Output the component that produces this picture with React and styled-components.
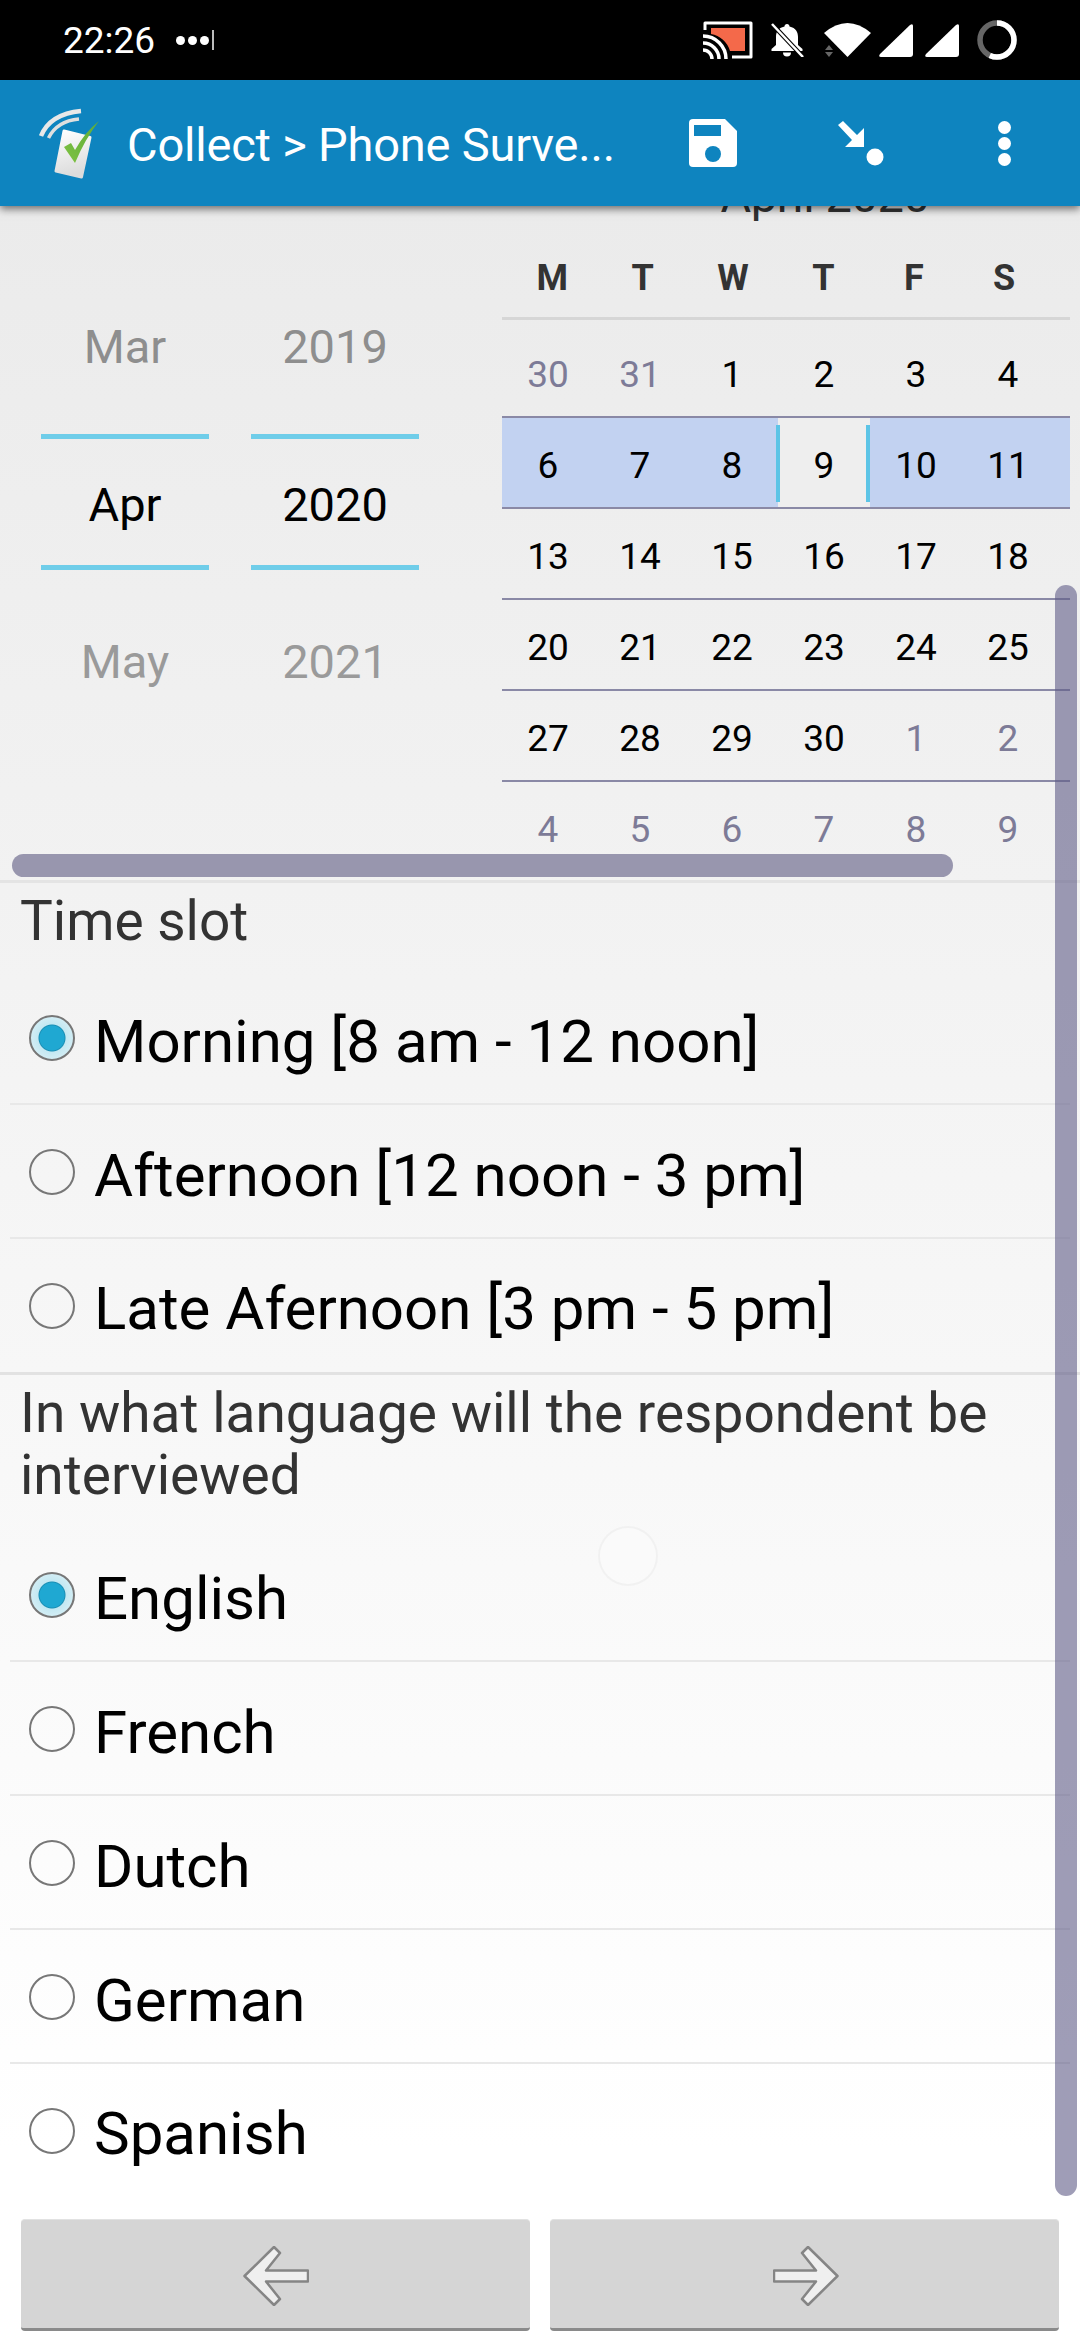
import React from "react";
import styled, { createGlobalStyle } from "styled-components";

const BLUE = "#0e84bf";
const TIME_SLOTS = ["Morning [8 am - 12 noon]", "Afternoon [12 noon - 3 pm]", "Late Afernoon [3 pm - 5 pm]"];
const LANGUAGES = ["English", "French", "Dutch", "German", "Spanish"];
const WEEKDAYS = ["M", "T", "W", "T", "F", "S"];
const WEEKS = [
  [[30, true], [31, true], [1], [2], [3], [4]],
  [[6], [7], [8], [9], [10], [11]],
  [[13], [14], [15], [16], [17], [18]],
  [[20], [21], [22], [23], [24], [25]],
  [[27], [28], [29], [30], [1, true], [2, true]],
  [[4, true], [5, true], [6, true], [7, true], [8, true], [9, true]],
];

const App = () => (
  <>
    <GlobalStyle />
    <Page>
      <StatusBar>
        <Clock>22:26</Clock>
        <NotifDots>
          <i />
          <i />
          <i />
        </NotifDots>
        <NotifBar />
        <StatusIcons>
          <CastIcon />
          <BellOffIcon />
          <WifiIcon />
          <SignalIcon $gap={7} />
          <SignalIcon $gap={11} />
          <BatteryRing />
        </StatusIcons>
      </StatusBar>

      <AppBar>
        <Logo />
        <Title>Collect &gt; Phone Surve...</Title>
        <SaveIcon />
        <GotoIcon />
        <MenuDots>
          <i />
          <i />
          <i />
        </MenuDots>
      </AppBar>

      <Main>
        <DateWidget>
          <Pickers>
            <PickerColumn>
              <PickerOption>Mar</PickerOption>
              <PickerCurrent>Apr</PickerCurrent>
              <PickerOption $faded>May</PickerOption>
            </PickerColumn>
            <PickerColumn>
              <PickerOption>2019</PickerOption>
              <PickerCurrent>2020</PickerCurrent>
              <PickerOption $faded>2021</PickerOption>
            </PickerColumn>
          </Pickers>
          <Calendar>
            <MonthTitle>April 2020</MonthTitle>
            <WeekHeader>
              {WEEKDAYS.map((d, i) => (
                <span key={i}>{d}</span>
              ))}
            </WeekHeader>
            <Weeks>
              {WEEKS.map((week, i) => (
                <WeekRow key={i} $selected={i === 1}>
                  {week.map(([day, muted]) => (
                    <Day key={day} $muted={muted} $focused={i === 1 && day === 9}>
                      {day}
                    </Day>
                  ))}
                </WeekRow>
              ))}
            </Weeks>
          </Calendar>
        </DateWidget>

        <Question>
          <Prompt>Time slot</Prompt>
          {TIME_SLOTS.map((label, i) => (
            <Option key={label} $last={i === TIME_SLOTS.length - 1}>
              <Radio $checked={i === 0} />
              <OptionLabel>{label}</OptionLabel>
            </Option>
          ))}
        </Question>

        <SectionRule />

        <Question>
          <Prompt $tall>In what language will the respondent be interviewed</Prompt>
          {LANGUAGES.map((label, i) => (
            <Option key={label} $last={i === LANGUAGES.length - 1}>
              <Radio $checked={i === 0} />
              <OptionLabel>{label}</OptionLabel>
            </Option>
          ))}
        </Question>

        <HorizontalThumb />
        <VerticalThumb />
        <TouchGhost />
      </Main>

      <NavBar>
        <NavButton>
          <ArrowIcon />
        </NavButton>
        <NavButton>
          <ArrowIcon $flip />
        </NavButton>
      </NavBar>
    </Page>
  </>
);

/* ---- drawings ---- */

const CastIcon = () => (
  <Glyph width="50" height="38" viewBox="0 0 50 38">
    <path d="M8 7H42V30H27A24 24 0 0 0 8 13Z" fill="#f4694a" />
    <path d="M2 9V2H48V36H29" fill="none" stroke="#fff" strokeWidth="3" strokeLinejoin="round" />
    <path
      d="M0 15A23 23 0 0 1 23 38M0 22A16 16 0 0 1 16 38M0 29A9 9 0 0 1 9 38"
      fill="none"
      stroke="#fff"
      strokeWidth="3.5"
    />
  </Glyph>
);

const BellOffIcon = () => (
  <Glyph $gap={17} width="34" height="34" viewBox="0 0 34 34">
    <path
      d="M17 1c-1.500 0-2.500 1-2.500 2.500C8 5 6 9 6 14v8l-4.500 4v2h31v-2l-4.500-4v-8c0-5-2-9-8.500-10.500C19.500 2 18.500 1 17 1zM13 29.500a4 4 0 0 0 8 0z"
      fill="#fff"
    />
    <path d="M2 1L33 34" stroke="#000" strokeWidth="4.500" />
    <path d="M2 1L33 34" stroke="#fff" strokeWidth="2.500" />
  </Glyph>
);

const WifiIcon = () => (
  <Glyph $gap={20} width="47" height="34" viewBox="0 0 47 34">
    <path d="M0 10Q23.500 -10 47 10L23.500 34Z" fill="#fff" />
    <path d="M1 27L5 22L9 27ZM1 29L5 34L9 29Z" fill="#666" />
  </Glyph>
);

const SignalIcon = ({ $gap }) => (
  <Glyph $gap={$gap} width="35" height="34" viewBox="0 0 35 34">
    <path d="M2 31L32 2Q35 0 35 3V31Q35 34 32 34H3Q0 34 2 31Z" fill="#fff" />
  </Glyph>
);

const BatteryRing = () => (
  <Glyph $gap={18} width="40" height="40" viewBox="0 0 40 40">
    <circle cx="20" cy="20" r="17" fill="none" stroke="#666" strokeWidth="5.500" />
    <circle
      cx="20"
      cy="20"
      r="17"
      fill="none"
      stroke="#fff"
      strokeWidth="5.500"
      pathLength="100"
      strokeDasharray="57 100"
      transform="rotate(-90 20 20)"
    />
  </Glyph>
);

const Logo = () => (
  <LogoSvg width="70" height="75" viewBox="35 25 70 75">
    <defs>
      <linearGradient id="logoCard" x1="0" y1="0" x2="0.2" y2="1">
        <stop offset="0" stopColor="#ffffff" />
        <stop offset="1" stopColor="#dcdcdc" />
      </linearGradient>
      <linearGradient id="logoCheck" x1="0" y1="1" x2="1" y2="0">
        <stop offset="0" stopColor="#7fc241" />
        <stop offset="1" stopColor="#5cab3a" />
      </linearGradient>
    </defs>
    <path d="M41 55Q50 33 81 30" fill="none" stroke="#e8e8e8" strokeWidth="4.500" />
    <path d="M48.500 57Q57 40 79 38" fill="none" stroke="#dfdfdf" strokeWidth="3.500" />
    <path d="M64 50L90 56.500L81.500 96L56 90Z" fill="url(#logoCard)" stroke="url(#logoCard)" strokeWidth="3" strokeLinejoin="round" />
    <path d="M64 66L71 62L75 69Q85 51 99 40Q85 58 75 82Z" fill="url(#logoCheck)" />
  </LogoSvg>
);

const SaveIcon = () => (
  <ActionSvg $gap={0} width="48" height="48" viewBox="0 0 48 48">
    <path d="M4 0H36L48 12V44A4 4 0 0 1 44 48H4A4 4 0 0 1 0 44V4A4 4 0 0 1 4 0Z" fill="#fff" />
    <rect x="5" y="6" width="27" height="11" fill={BLUE} />
    <circle cx="24" cy="35" r="8" fill={BLUE} />
  </ActionSvg>
);

const GotoIcon = () => (
  <ActionSvg $gap={100} width="47" height="46" viewBox="0 0 47 46">
    <path d="M1 5L6 1L20 15L27 8V27H8L15 20Z" fill="#fff" />
    <circle cx="38" cy="37" r="8.500" fill="#fff" />
  </ActionSvg>
);

const ArrowIcon = ({ $flip }) => (
  <ArrowSvg $flip={$flip} width="66" height="60" viewBox="0 0 66 60">
    <path
      d="M1.500 30L31 1L37 7L23 24.500H65V35.500H23L37 53L31 59Z"
      fill="#efefef"
      stroke="#858585"
      strokeWidth="2.500"
      strokeLinejoin="round"
    />
  </ArrowSvg>
);

/* ---- page ---- */

const GlobalStyle = createGlobalStyle`
  html, body {
    margin: 0;
    padding: 0;
    background: #fff;
  }
  * {
    box-sizing: border-box;
  }
`;

const Page = styled.div`
  width: 1080px;
  height: 2340px;
  display: flex;
  flex-direction: column;
  overflow: hidden;
  font-family: Roboto, "Liberation Sans", sans-serif;
  background: linear-gradient(#ebebeb 206px, #ffffff 2150px);
`;

const StatusBar = styled.header`
  height: 80px;
  flex: none;
  background: #000;
  color: #fff;
  display: flex;
  align-items: center;
  padding-left: 63px;
`;

const Clock = styled.span`
  font-size: 37px;
  margin-right: 21px;
`;

const NotifDots = styled.div`
  display: flex;
  gap: 3px;
  i {
    width: 9px;
    height: 9px;
    border-radius: 50%;
    background: #fff;
  }
`;

const NotifBar = styled.div`
  width: 2px;
  height: 20px;
  margin-left: 3px;
  background: #bbb;
`;

const StatusIcons = styled.div`
  margin-left: auto;
  margin-right: 63px;
  display: flex;
  align-items: center;
`;

const Glyph = styled.svg`
  display: block;
  flex: none;
  margin-left: ${(p) => p.$gap || 0}px;
`;

const AppBar = styled.div`
  position: relative;
  z-index: 2;
  height: 126px;
  flex: none;
  display: flex;
  align-items: center;
  padding-left: 35px;
  background: ${BLUE};
  box-shadow: 0 3px 8px rgba(0, 0, 0, 0.55);
`;

const LogoSvg = styled.svg`
  flex: none;
  display: block;
`;

const Title = styled.h1`
  margin: 2px 0 0 22px;
  width: 562px;
  flex: none;
  font-size: 47px;
  letter-spacing: -0.2px;
  font-weight: 400;
  color: #fff;
  white-space: nowrap;
`;

const ActionSvg = styled.svg`
  flex: none;
  display: block;
  margin-left: ${(p) => p.$gap}px;
`;

const MenuDots = styled.div`
  margin-left: 114px;
  display: flex;
  flex-direction: column;
  gap: 3px;
  i {
    width: 13px;
    height: 13px;
    border-radius: 50%;
    background: #fff;
  }
`;

const Main = styled.main`
  position: relative;
  flex: 1;
  min-height: 0;
  overflow: hidden;
`;

const DateWidget = styled.section`
  height: 677px;
  display: flex;
  overflow: hidden;
  border-bottom: 3px solid #e4e4e4;
`;

const Pickers = styled.div`
  width: 502px;
  flex: none;
  display: flex;
  gap: 42px;
  padding: 54px 0 0 41px;
`;

const PickerColumn = styled.div`
  width: 168px;
  display: flex;
  flex-direction: column;
  text-align: center;
  font-size: 47px;
`;

const PickerOption = styled.div`
  height: 174px;
  line-height: 174px;
  color: ${(p) => (p.$faded ? "#9a9a9a" : "#8e8e8e")};
`;

const PickerCurrent = styled.div`
  height: 136px;
  margin-bottom: 5px;
  padding-top: 4px;
  line-height: 123px;
  color: #000;
  border-top: 5px solid #6fcde9;
  border-bottom: 5px solid #6fcde9;
`;

const Calendar = styled.div`
  width: 568px;
  flex: none;
  margin-top: -42px;
`;

const MonthTitle = styled.div`
  height: 64px;
  line-height: 64px;
  padding-left: 78px;
  text-align: center;
  font-size: 47px;
  letter-spacing: -0.4px;
  color: #333;
`;

const WeekHeader = styled.div`
  height: 92px;
  padding: 11px 0 0 5px;
  display: grid;
  grid-template-columns: repeat(6, 90.4px);
  align-items: center;
  text-align: center;
  font-size: 36px;
  font-weight: 700;
  color: #333;
  border-bottom: 3px solid #d6d6d6;
`;

const Weeks = styled.div`
  padding-top: 7px;
`;

const WeekRow = styled.div`
  height: 91px;
  padding-right: 16px;
  display: grid;
  grid-template-columns: repeat(6, 92px);
  border-bottom: 2px solid #8a89a6;
  background: ${(p) => (p.$selected ? "#c2d2f1" : "transparent")};
  &:last-child {
    border-bottom: 0;
  }
`;

const Day = styled.div`
  position: relative;
  height: 89px;
  line-height: 96px;
  text-align: center;
  font-size: 37px;
  color: ${(p) => (p.$muted ? "#7d7b97" : "#000")};
  ${(p) =>
    p.$focused &&
    `
    background: #eeeeee;
    &::before, &::after {
      content: "";
      position: absolute;
      top: 7px;
      bottom: 5px;
      width: 4px;
      background: #5cc4e6;
    }
    &::before { left: -2px; }
    &::after { right: 0; }
  `}
`;

const Question = styled.section`
  display: flex;
  flex-direction: column;
`;

const Prompt = styled.div`
  padding: 7px 20px ${(p) => (p.$tall ? 22 : 19)}px;
  font-size: 55px;
  line-height: 62px;
  color: #333;
`;

const Option = styled.div`
  height: ${(p) => (p.$last ? 133 : 134)}px;
  margin: 0 10px;
  padding-left: 19px;
  display: flex;
  align-items: center;
  gap: 19px;
  border-bottom: 2px solid ${(p) => (p.$last ? "transparent" : "#e8e8e8")};
`;

const Radio = styled.span`
  width: 46px;
  height: 46px;
  flex: none;
  margin-top: 2px;
  border-radius: 50%;
  border: 2px solid #777;
  background: ${(p) =>
    p.$checked
      ? "radial-gradient(circle, #1fa8d2 0 12px, #1a8fb5 13px, #c4e8f2 14px, #e4f4f8 100%)"
      : "transparent"};
`;

const OptionLabel = styled.span`
  font-size: 60px;
  color: #000;
  position: relative;
  top: 4px;
`;

const SectionRule = styled.hr`
  margin: 0;
  border: 0;
  height: 3px;
  background: #e2e2e2;
`;

const HorizontalThumb = styled.div`
  position: absolute;
  left: 12px;
  top: 648px;
  width: 941px;
  height: 23px;
  border-radius: 12px;
  background: #9896ae;
`;

const VerticalThumb = styled.div`
  position: absolute;
  left: 1055px;
  top: 379px;
  width: 22px;
  height: 1611px;
  border-radius: 11px;
  background: rgba(95, 92, 135, 0.6);
`;

const TouchGhost = styled.div`
  position: absolute;
  left: 598px;
  top: 1320px;
  width: 60px;
  height: 60px;
  border-radius: 50%;
  border: 2px solid rgba(0, 0, 0, 0.035);
  background: rgba(255, 255, 255, 0.25);
`;

const NavBar = styled.nav`
  flex: none;
  display: flex;
  gap: 20px;
  padding: 9px 21px;
`;

const NavButton = styled.button`
  width: 509px;
  height: 112px;
  padding: 3px 0 0;
  display: flex;
  align-items: center;
  justify-content: center;
  background: #d5d5d5;
  border: 0;
  border-top: 1px solid #e2e2e2;
  border-bottom: 3px solid #8a8a8a;
  border-radius: 4px;
`;

const ArrowSvg = styled.svg`
  display: block;
  margin-left: ${(p) => (p.$flip ? 3 : 0)}px;
  transform: ${(p) => (p.$flip ? "scaleX(-1)" : "none")};
`;

export default App;
